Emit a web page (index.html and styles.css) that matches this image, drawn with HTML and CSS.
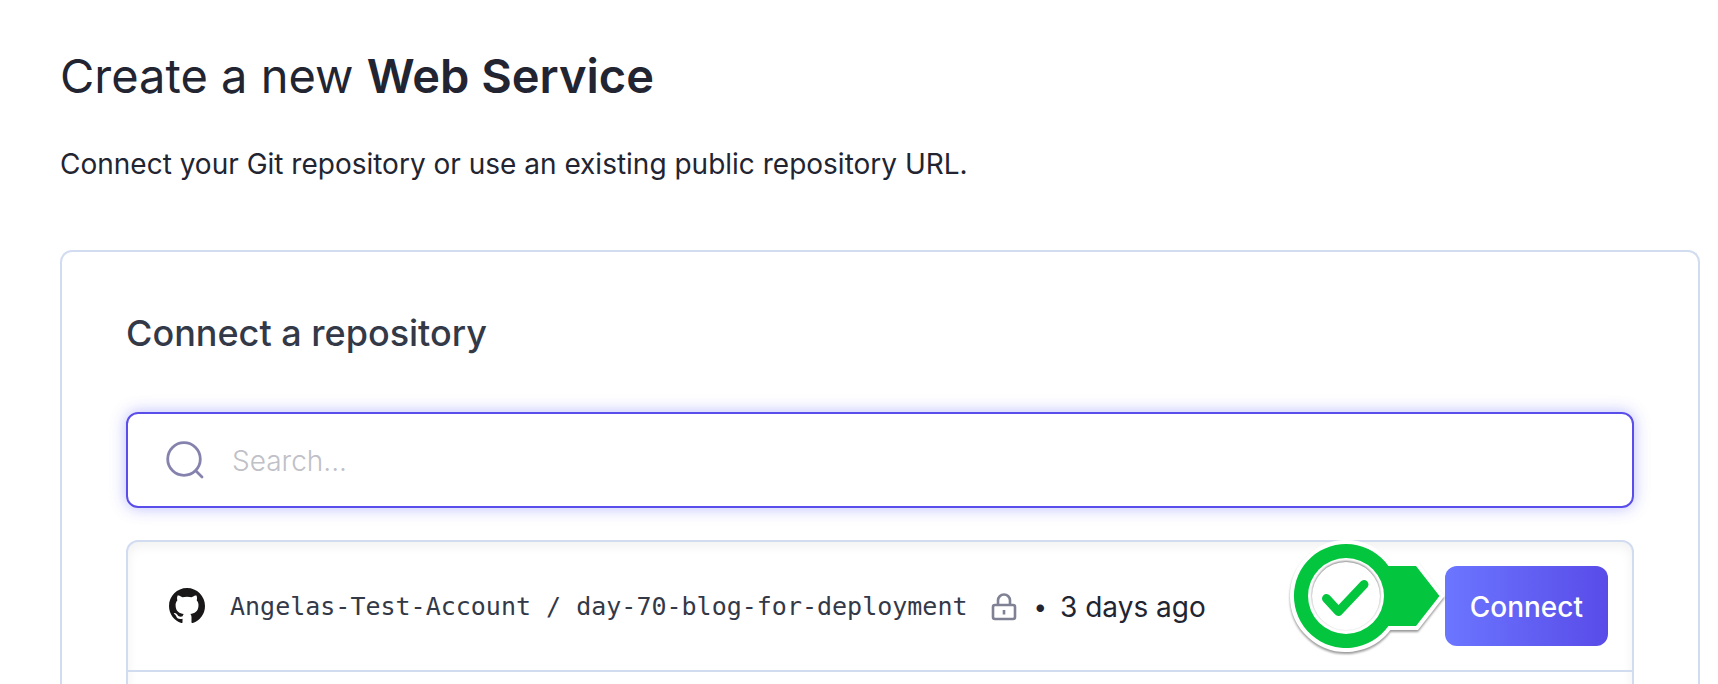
FILE: index.html
```html
<!DOCTYPE html>
<html lang="en">
<head>
<meta charset="utf-8">
<title>Create a new Web Service</title>
<link rel="stylesheet" href="styles.css">
</head>
<body>
<main class="page">
  <header class="intro">
    <h1 class="title">Create a new <strong>Web Service</strong></h1>
    <p class="lead">Connect your Git repository or use an existing public repository URL.</p>
  </header>
  <section class="card">
    <h2 class="card-title">Connect a repository</h2>
    <label class="search">
      <svg class="search-icon" viewBox="0 0 40 40" aria-hidden="true"><circle cx="19" cy="19" r="16.3"/><path d="M31 31l6 6"/></svg>
      <input class="search-input" type="search" placeholder="Search..." aria-label="Search repositories">
    </label>
    <ul class="repos">
      <li class="repo">
        <svg class="github" viewBox="0 0 16 16" aria-hidden="true"><path d="M8 0C3.58 0 0 3.58 0 8c0 3.54 2.29 6.53 5.47 7.59.4.07.55-.17.55-.38 0-.19-.01-.82-.01-1.49-2.01.37-2.53-.49-2.69-.94-.09-.23-.48-.94-.82-1.13-.28-.15-.68-.52-.01-.53.63-.01 1.08.58 1.23.82.72 1.21 1.87.87 2.33.66.07-.52.28-.87.51-1.07-1.78-.2-3.64-.89-3.64-3.95 0-.87.31-1.59.82-2.15-.08-.2-.36-1.02.08-2.12 0 0 .67-.21 2.2.82.64-.18 1.32-.27 2-.27s1.36.09 2 .27c1.53-1.04 2.2-.82 2.2-.82.44 1.1.16 1.92.08 2.12.51.56.82 1.27.82 2.15 0 3.07-1.87 3.75-3.65 3.95.29.25.54.73.54 1.48 0 1.07-.01 1.93-.01 2.2 0 .21.15.46.55.38A8.01 8.01 0 0 0 16 8c0-4.42-3.58-8-8-8z"/></svg>
        <div class="details">
          <span class="repo-name">Angelas-Test-Account / day-70-blog-for-deployment</span>
          <svg class="lock" viewBox="0 0 26 28" aria-hidden="true"><rect x="2" y="12" width="22" height="14" rx="2"/><path d="M7 12V7.500a6 6 0 0 1 12 0V12M13 17v4.500"/></svg>
          <span class="dot">•</span>
          <span class="age">3 days ago</span>
        </div>
        <div class="action">
          <svg class="marker" viewBox="0 0 168 124" aria-hidden="true">
            <path class="marker-edge" d="M104.400 32A52 52 0 1 0 104.400 92H132L155.500 62L132 32Z"/>
            <path class="marker-body" d="M104.400 32A52 52 0 1 0 104.400 92H132L155.500 62L132 32Z"/>
            <circle class="marker-disc" cx="62" cy="62" r="38"/>
            <circle class="marker-ring" cx="62" cy="62" r="34"/>
            <path class="marker-tick" d="M42.500 64.500L54.500 77.500L80 50.500"/>
          </svg>
          <button class="connect" type="button">Connect</button>
        </div>
      </li>
      <li class="repo"></li>
    </ul>
  </section>
</main>
</body>
</html>
```
FILE: styles.css
```css
* { box-sizing: border-box; }
body {
  margin: 0;
  background: #fff;
  color: #222531;
  font-family: Inter, "Liberation Sans", sans-serif;
  font-size: 28px;
  line-height: 40px;
}
.page {
  display: flex;
  flex-direction: column;
  height: 100vh;
  overflow: hidden;
  padding: 48px 18px 0 60px;
}
.intro { padding-bottom: 66px; }
.title {
  margin: 0 0 40px;
  font-size: 47px;
  line-height: 56px;
  font-weight: 400;
}
.title strong { font-weight: 600; }
.lead { margin: 0; }
.card {
  flex: 1;
  display: flex;
  flex-direction: column;
  border: 2px solid #d1dcf1;
  border-bottom: 0;
  border-radius: 12px 12px 0 0;
  padding: 57px 64px 0;
}
.card-title {
  margin: 0 0 55px;
  font-size: 36px;
  line-height: 48px;
  font-weight: 500;
  color: #343948;
}
.search {
  display: flex;
  align-items: center;
  gap: 27px;
  height: 96px;
  flex: none;
  padding: 0 37px;
  border: 2px solid #5a4eea;
  border-radius: 12px;
  box-shadow: 0 0 16px rgba(90, 90, 250, .42);
}
.search-icon {
  width: 40px;
  height: 40px;
  flex: none;
  fill: none;
  stroke: #8583ad;
  stroke-width: 2.8;
  stroke-linecap: round;
}
.search-input {
  flex: 1;
  border: 0;
  outline: 0;
  padding: 2px 0 0;
  background: none;
  color: inherit;
  font: inherit;
  font-weight: 300;
}
.search-input::placeholder { color: #c0c0c7; opacity: 1; }
.repos {
  flex: none;
  margin: 32px 0 0;
  padding: 0;
  list-style: none;
  border: 2px solid #d1dcf1;
  border-radius: 12px;
  box-shadow: inset 0 4px 12px rgba(0, 0, 0, .06);
}
.repo {
  display: flex;
  align-items: center;
  min-height: 128px;
  padding: 24px 24px 24px 41px;
}
.repo + .repo { border-top: 2px solid #d1dcf1; }
.github { width: 36px; height: 36px; flex: none; margin-right: 25px; fill: #191717; }
.details { display: flex; align-items: center; padding-top: 2px; }
.repo-name {
  color: #343948;
  font-family: "DejaVu Sans Mono", monospace;
  font-size: 25px;
  white-space: nowrap;
}
.lock {
  width: 26px;
  height: 28px;
  flex: none;
  margin: 0 17px 0 23px;
  fill: none;
  stroke: #7f8194;
  stroke-width: 2.6;
}
.dot { margin-right: 13px; font-size: 24px; }
.age { white-space: nowrap; }
.action { position: relative; margin-left: auto; }
.marker {
  position: absolute;
  right: 156px;
  top: -32px;
  width: 168px;
  height: 124px;
}
.marker-edge {
  fill: #fff;
  stroke: #fff;
  stroke-width: 8;
  filter: drop-shadow(0 2px 1px rgba(0, 0, 0, .4));
}
.marker-body { fill: #03c53e; }
.marker-disc { fill: #fff; }
.marker-ring { fill: #fff; filter: drop-shadow(0 -1px 1px rgba(0, 0, 0, .5)); }
.marker-tick {
  fill: none;
  stroke: #03c53e;
  stroke-width: 9;
  stroke-linecap: round;
  stroke-linejoin: round;
}
.connect {
  height: 80px;
  padding: 2px 25px 0;
  border: 0;
  border-radius: 12px;
  background: linear-gradient(90deg, #6b76ff, #594be8);
  color: #fff;
  font: inherit;
  font-weight: 500;
}
```
